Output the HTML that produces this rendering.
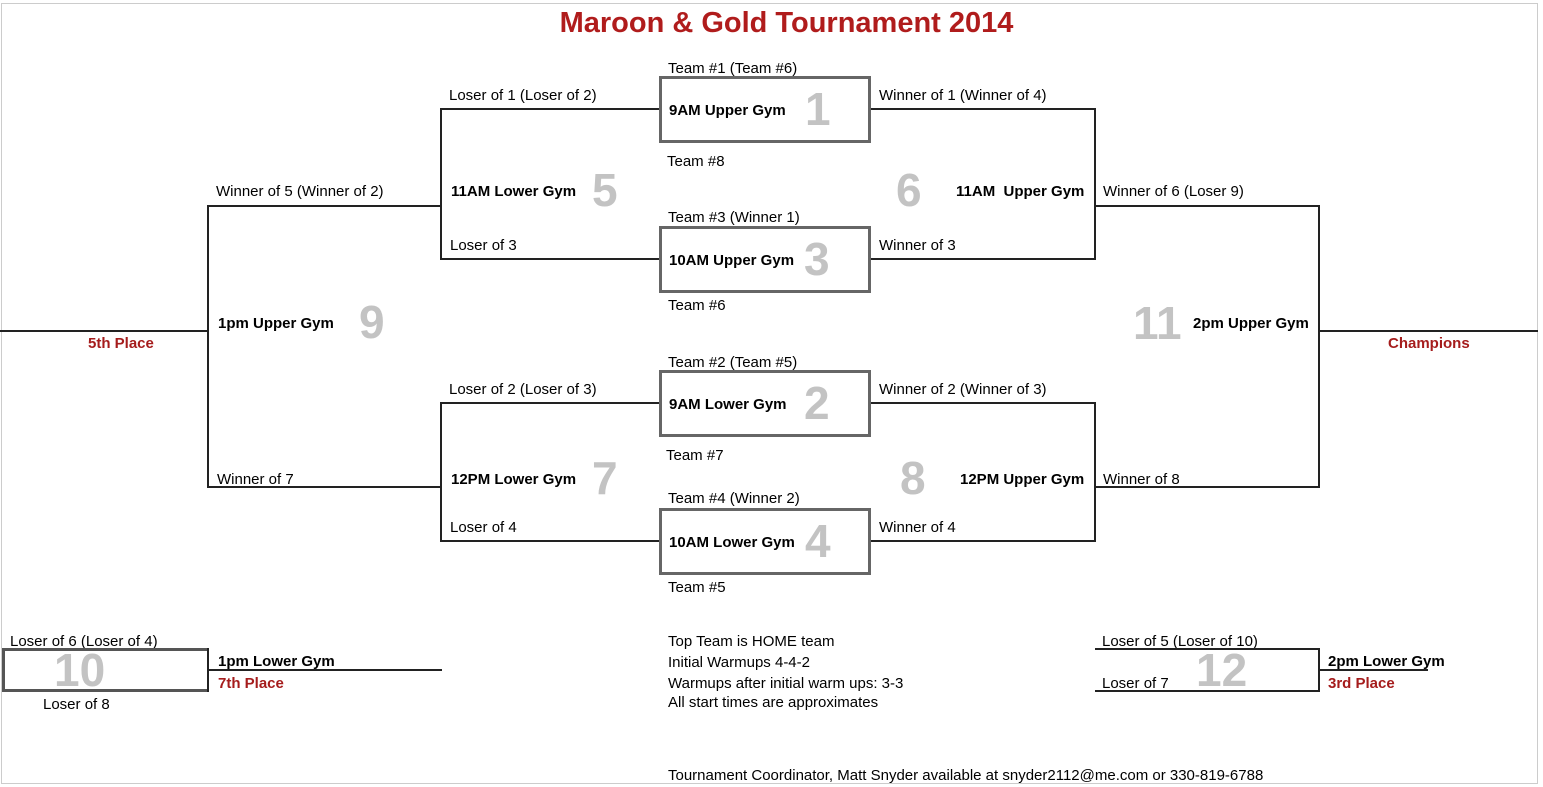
<!DOCTYPE html>
<html><head><meta charset="utf-8"><style>
body{margin:0;width:1543px;height:787px;background:#fff;position:relative;overflow:hidden;font-family:"Liberation Sans",Arial,sans-serif;color:#000}
div{position:absolute}
.t{font-size:15px;line-height:19px;white-space:nowrap}
.b{font-size:15px;line-height:19px;font-weight:bold;white-space:nowrap}
.r{font-size:15px;line-height:19px;font-weight:bold;color:#a51c1c;white-space:nowrap}
.n{font-size:46px;line-height:46px;font-weight:bold;color:#c3c3c3;white-space:nowrap}
.h{height:2px;background:#222}
.v{width:2px;background:#222}
.box{border:3px solid #666;box-sizing:border-box;width:212px;height:67px}
</style></head><body>
<div style="left:1px;top:3px;width:1537px;height:781px;border:1px solid #ccc;box-sizing:border-box"></div>
<div style="left:0;top:5px;width:1573px;text-align:center;font-size:29px;font-weight:bold;color:#b01c1c;line-height:36px">Maroon &amp; Gold Tournament 2014</div>

<div class="h" style="left:441px;top:108px;width:218px"></div>
<div class="h" style="left:870px;top:108px;width:226px"></div>
<div class="v" style="left:440px;top:108px;height:152px"></div>
<div class="v" style="left:1094px;top:108px;height:152px"></div>
<div class="h" style="left:441px;top:258px;width:218px"></div>
<div class="h" style="left:870px;top:258px;width:226px"></div>
<div class="h" style="left:208px;top:205px;width:234px"></div>
<div class="h" style="left:1095px;top:205px;width:225px"></div>
<div class="h" style="left:441px;top:402px;width:218px"></div>
<div class="h" style="left:870px;top:402px;width:226px"></div>
<div class="v" style="left:440px;top:402px;height:140px"></div>
<div class="v" style="left:1094px;top:402px;height:140px"></div>
<div class="h" style="left:441px;top:540px;width:218px"></div>
<div class="h" style="left:870px;top:540px;width:226px"></div>
<div class="h" style="left:208px;top:486px;width:234px"></div>
<div class="h" style="left:1095px;top:486px;width:225px"></div>
<div class="v" style="left:207px;top:205px;height:283px"></div>
<div class="v" style="left:1318px;top:205px;height:283px"></div>
<div class="h" style="left:0;top:330px;width:208px"></div>
<div class="h" style="left:1319px;top:330px;width:219px"></div>

<div class="box" style="left:659px;top:76px"></div>
<div class="box" style="left:659px;top:226px"></div>
<div class="box" style="left:659px;top:370px"></div>
<div class="box" style="left:659px;top:508px"></div>

<div class="t" style="left:668px;top:59px">Team #1 (Team #6)</div>
<div class="b" style="left:669px;top:101px">9AM Upper Gym</div>
<div class="n" style="left:805px;top:86px">1</div>
<div class="t" style="left:667px;top:152px">Team #8</div>
<div class="t" style="left:668px;top:208px">Team #3 (Winner 1)</div>
<div class="b" style="left:669px;top:251px">10AM Upper Gym</div>
<div class="n" style="left:804px;top:236px">3</div>
<div class="t" style="left:668px;top:296px">Team #6</div>
<div class="t" style="left:668px;top:353px">Team #2 (Team #5)</div>
<div class="b" style="left:669px;top:395px">9AM Lower Gym</div>
<div class="n" style="left:804px;top:380px">2</div>
<div class="t" style="left:666px;top:446px">Team #7</div>
<div class="t" style="left:668px;top:489px">Team #4 (Winner 2)</div>
<div class="b" style="left:669px;top:533px">10AM Lower Gym</div>
<div class="n" style="left:805px;top:518px">4</div>
<div class="t" style="left:668px;top:578px">Team #5</div>

<div class="t" style="left:449px;top:86px">Loser of 1 (Loser of 2)</div>
<div class="b" style="left:451px;top:182px">11AM Lower Gym</div>
<div class="n" style="left:592px;top:167px">5</div>
<div class="t" style="left:450px;top:236px">Loser of 3</div>
<div class="t" style="left:216px;top:182px">Winner of 5 (Winner of 2)</div>
<div class="b" style="left:218px;top:314px">1pm Upper Gym</div>
<div class="n" style="left:359px;top:299px">9</div>
<div class="r" style="left:88px;top:334px">5th Place</div>
<div class="t" style="left:449px;top:380px">Loser of 2 (Loser of 3)</div>
<div class="t" style="left:217px;top:470px">Winner of 7</div>
<div class="b" style="left:451px;top:470px">12PM Lower Gym</div>
<div class="n" style="left:592px;top:455px">7</div>
<div class="t" style="left:450px;top:518px">Loser of 4</div>

<div class="t" style="left:879px;top:86px">Winner of 1 (Winner of 4)</div>
<div class="n" style="left:896px;top:167px">6</div>
<div class="b" style="left:956px;top:182px">11AM&nbsp; Upper Gym</div>
<div class="t" style="left:879px;top:236px">Winner of 3</div>
<div class="t" style="left:1103px;top:182px">Winner of 6 (Loser 9)</div>
<div class="n" style="left:1133px;top:300px">11</div>
<div class="b" style="left:1193px;top:314px">2pm Upper Gym</div>
<div class="r" style="left:1388px;top:334px">Champions</div>
<div class="t" style="left:879px;top:380px">Winner of 2 (Winner of 3)</div>
<div class="n" style="left:900px;top:455px">8</div>
<div class="b" style="left:960px;top:470px">12PM Upper Gym</div>
<div class="t" style="left:1103px;top:470px">Winner of 8</div>
<div class="t" style="left:879px;top:518px">Winner of 4</div>

<div class="t" style="left:10px;top:632px">Loser of 6 (Loser of 4)</div>
<div style="left:2px;top:648px;width:207px;height:44px;border:3px solid #555;border-right:none;box-sizing:border-box"></div>
<div class="v" style="left:207px;top:648px;height:44px"></div>
<div class="h" style="left:208px;top:669px;width:234px"></div>
<div class="n" style="left:54px;top:647px">10</div>
<div class="b" style="left:218px;top:652px">1pm Lower Gym</div>
<div class="r" style="left:218px;top:674px">7th Place</div>
<div class="t" style="left:43px;top:695px">Loser of 8</div>

<div class="t" style="left:1102px;top:632px">Loser of 5 (Loser of 10)</div>
<div class="h" style="left:1095px;top:648px;width:225px"></div>
<div class="h" style="left:1095px;top:690px;width:225px"></div>
<div class="v" style="left:1318px;top:648px;height:44px"></div>
<div class="h" style="left:1319px;top:669px;width:109px"></div>
<div class="n" style="left:1196px;top:647px">12</div>
<div class="t" style="left:1102px;top:674px">Loser of 7</div>
<div class="b" style="left:1328px;top:652px">2pm Lower Gym</div>
<div class="r" style="left:1328px;top:674px">3rd Place</div>

<div class="t" style="left:668px;top:632px">Top Team is HOME team</div>
<div class="t" style="left:668px;top:653px">Initial Warmups 4-4-2</div>
<div class="t" style="left:668px;top:674px">Warmups after initial warm ups: 3-3</div>
<div class="t" style="left:668px;top:693px">All start times are approximates</div>
<div class="t" style="left:668px;top:766px">Tournament Coordinator, Matt Snyder available at snyder2112@me.com or 330-819-6788</div>
</body></html>
